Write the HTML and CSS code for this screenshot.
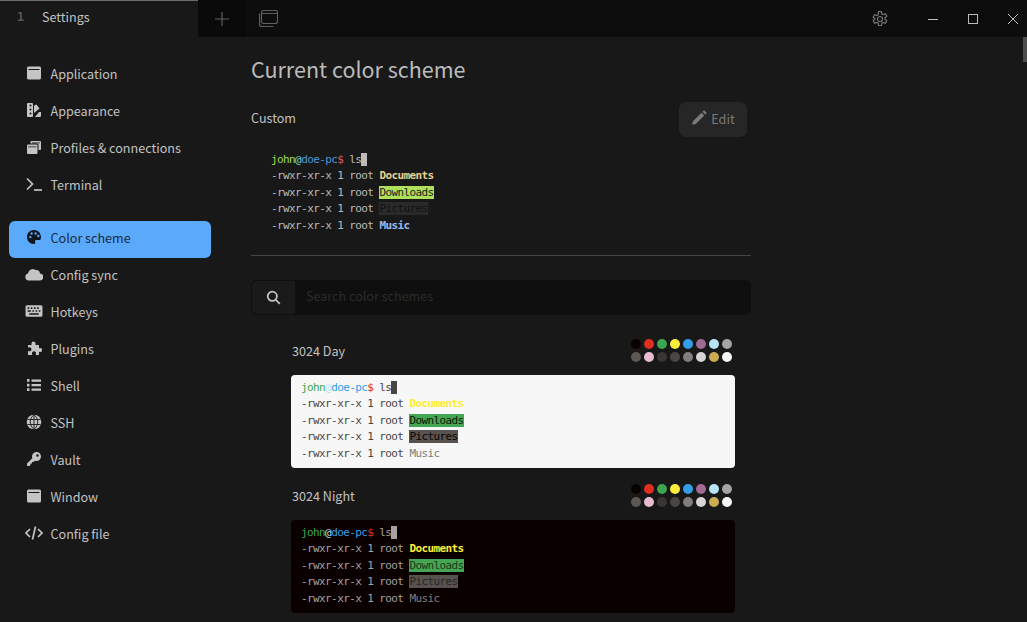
FILE: index.html
```html
<!DOCTYPE html>
<html lang="en">
<head>
<meta charset="utf-8">
<title>Settings</title>
<link rel="stylesheet" href="styles.css">
</head>
<body>
<div class="app">
  <header class="titlebar">
    <div class="tab"><span class="tab-num">1</span><span class="tab-title">Settings</span></div>
    <button class="tb-btn tb-plus" aria-label="New tab"><svg width="16" height="16" viewBox="0 0 16 16"><path d="M8 1v14M1 8h14" class="st-grey"/></svg></button>
    <button class="tb-btn tb-win" aria-label="Profiles"><svg width="19" height="17" viewBox="0 0 19 17"><path d="M4.5.5h12a2 2 0 0 1 2 2v9a2 2 0 0 1-2 2h-12a2 2 0 0 1-2-2v-9a2 2 0 0 1 2-2zM2.500 3.500h16M.5 3.500v11a2 2 0 0 0 2 2h12" class="st-grey"/></svg></button>
    <div class="spacer"></div>
    <button class="tb-btn tb-gear" aria-label="Settings"><svg width="18" height="18" viewBox="0 0 18 18"><path d="M7.600 1h2.800l.4 2.300 1.400.8 2.200-.8 1.400 2.400-1.800 1.500v1.600l1.800 1.500-1.400 2.400-2.200-.8-1.400.8-.4 2.300H7.600l-.4-2.300-1.400-.8-2.200.8-1.400-2.400 1.800-1.500V8.200L2.200 6.700l1.400-2.400 2.200.8 1.400-.8z" transform="translate(0 .500)" class="st-grey"/><circle cx="9" cy="9" r="2.500" class="st-grey"/></svg></button>
    <button class="tb-btn win-ctl" aria-label="Minimize"><svg width="10" height="10" viewBox="0 0 10 10"><path d="M0 5.500h10" class="st-light"/></svg></button>
    <button class="tb-btn win-ctl" aria-label="Maximize"><svg width="10" height="10" viewBox="0 0 10 10"><rect x=".5" y=".5" width="9" height="9" class="st-light"/></svg></button>
    <button class="tb-btn win-ctl" aria-label="Close"><svg width="10" height="10" viewBox="0 0 10 10"><path d="M0 0l10 10M10 0L0 10" class="st-light"/></svg></button>
  </header>

  <div class="body">
    <nav class="sidebar">
      <a class="nav-item"><svg class="ic" viewBox="0 0 16 16"><path d="M2.500 1.500h11a1.500 1.500 0 0 1 1.500 1.500v10a1.500 1.500 0 0 1-1.500 1.500h-11A1.500 1.500 0 0 1 1 13V3a1.500 1.500 0 0 1 1.500-1.500zM2.500 4v1h11V4z" fill-rule="evenodd"/></svg>Application</a>
      <a class="nav-item"><svg class="ic" viewBox="0 0 16 16"><path d="M2 1h4a1 1 0 0 1 1 1v12a1 1 0 0 1-1 1H2a1 1 0 0 1-1-1V2a1 1 0 0 1 1-1zm1.500 2.500a1 1 0 1 0 2 0 1 1 0 0 0-2 0zm0 4a1 1 0 1 0 2 0 1 1 0 0 0-2 0zm0 4a1 1 0 1 0 2 0 1 1 0 0 0-2 0z" fill-rule="evenodd"/><path d="M8 3.500l2.500-1 3 4L8 11zM9 15l4-5h2v4a1 1 0 0 1-1 1z"/></svg>Appearance</a>
      <a class="nav-item"><svg class="ic" viewBox="0 0 16 16"><path d="M2 5.500h8.500a1 1 0 0 1 1 1V14a1 1 0 0 1-1 1H2a1 1 0 0 1-1-1V6.500a1 1 0 0 1 1-1zM2 7.500v.8h8.500v-.8z" fill-rule="evenodd"/><path d="M4.500 4.500V3a1 1 0 0 1 1-1H14a1 1 0 0 1 1 1v7a1 1 0 0 1-1 1h-1.500v-5a1.500 1.500 0 0 0-1.500-1.500zM6 3.500v.8h8v-.8z" fill-rule="evenodd"/></svg>Profiles &amp; connections</a>
      <a class="nav-item nav-before-gap"><svg class="ic ic-wide" viewBox="0 0 17 16"><path d="M1.500 2.500L7 8l-5.500 5.500" class="st-icon"/><path d="M8.500 14h8" class="st-icon"/></svg>Terminal</a>

      <a class="nav-item nav-active"><svg class="ic" viewBox="0 0 16 16"><path d="M8 1C4 1 1 4 1 8s3 7 6.800 7c1.500 0 1.700-1 1.300-1.900-.5-1.200.2-2.100 1.500-2.100H13c1.300 0 2-1 2-2.600C15 4 12 1 8 1zM4.300 9.300a1.200 1.200 0 1 1 0-2.400 1.200 1.200 0 0 1 0 2.400zm1.300-3.600a1.200 1.200 0 1 1 0-2.400 1.200 1.200 0 0 1 0 2.400zm4 0a1.200 1.200 0 1 1 0-2.400 1.200 1.200 0 0 1 0 2.400zm2.700 2.500a1.200 1.200 0 1 1 0-2.400 1.200 1.200 0 0 1 0 2.400z" fill-rule="evenodd"/></svg>Color scheme</a>
      <a class="nav-item"><svg class="ic ic-wide" viewBox="0 0 18 14"><path d="M4 13.500a3.500 3.500 0 0 1-1-6.900A5 5 0 0 1 10.800 3a3.600 3.600 0 0 1 4.200 3.500 3.500 3.500 0 0 1-.5 7z"/></svg>Config sync</a>
      <a class="nav-item"><svg class="ic ic-wide" viewBox="0 0 17 14"><path d="M2 1.500h13a1.500 1.500 0 0 1 1.500 1.500v8a1.500 1.500 0 0 1-1.500 1.500H2A1.500 1.500 0 0 1 .5 11V3A1.500 1.500 0 0 1 2 1.500zM2.500 3.500V5h1.500V3.500zm3 0V5H7V3.500zm3 0V5H10V3.500zm3 0V5H13V3.500zM2.500 6.300v1.500h3V6.300zm4.500 0v1.500h1.500V6.300zm3 0v1.500h1.500V6.300zm3 0v1.500h1.500V6.300zM4 9.200v1.300h9V9.200z" fill-rule="evenodd"/></svg>Hotkeys</a>
      <a class="nav-item"><svg class="ic" viewBox="0 0 16 16"><path d="M5.500 3.500a2 2 0 1 1 4 0V5H13v3.200h.3a2 2 0 1 1 0 3.600H13V15H9.800v-.8a2 2 0 1 0-3.600 0v.8H2v-4h.5a2 2 0 1 0 0-3.500H2V5h3.500z"/></svg>Plugins</a>
      <a class="nav-item"><svg class="ic" viewBox="0 0 16 16"><path d="M5.500 2.500H15v2.200H5.500zM5.500 7H15v2.200H5.500zM5.500 11.500H15v2.200H5.500zM1 2h2.500v2.800H1zM1 6.700h2.500v2.800H1zM1 11.300h2.500v2.800H1z"/></svg>Shell</a>
      <a class="nav-item"><svg class="ic" viewBox="0 0 16 16"><circle cx="8" cy="8" r="7.300"/><path d="M8 .7c-5 4-5 10.600 0 14.600M8 .7c5 4 5 10.600 0 14.600M8 .7v14.600M1.300 5.500h13.400M1.300 10.500h13.400" class="st-cut"/></svg>SSH</a>
      <a class="nav-item"><svg class="ic" viewBox="0 0 16 16"><path d="M10.500 1a4.500 4.500 0 0 1 0 9c-.6 0-1.100-.1-1.600-.3L7.500 11H6v1.500H4.500V14l-1 1H1.500L1 14.500V12.500l5.300-5.300A4.500 4.500 0 0 1 10.500 1zm1 2.200a1.300 1.300 0 1 0 0 2.600 1.300 1.300 0 0 0 0-2.600z" fill-rule="evenodd"/></svg>Vault</a>
      <a class="nav-item"><svg class="ic" viewBox="0 0 16 16"><path d="M2.500 1.500h11a1.500 1.500 0 0 1 1.500 1.500v10a1.500 1.500 0 0 1-1.500 1.500h-11A1.500 1.500 0 0 1 1 13V3a1.500 1.500 0 0 1 1.500-1.500zM2.500 4v1h11V4z" fill-rule="evenodd"/></svg>Window</a>
      <a class="nav-item"><svg class="ic ic-wide" viewBox="0 0 18 16"><path d="M5 4L1 8l4 4M13 4l4 4-4 4M10.500 1.500l-3 13" class="st-icon"/></svg>Config file</a>
    </nav>

    <main class="content">
      <h1 class="page-title">Current color scheme</h1>
      <div class="current-row">
        <span class="current-name">Custom</span>
        <button class="edit-btn"><svg width="16" height="16" viewBox="0 0 15 15"><path d="M9.800 2.500l2.700 2.700-8 8-3.400.7.700-3.400zM10.700 1.600l.9-.9a1 1 0 0 1 1.400 0l1.300 1.300a1 1 0 0 1 0 1.400l-.9.900z"/></svg>Edit</button>
      </div>

      <div class="term term-custom">
        <div><span class="c-green">john</span><span class="c-cyan">@</span><span class="c-blue">doe-pc</span><span class="c-red">$</span> ls<span class="cursor"></span></div>
        <div>-rwxr-xr-x 1 root <b class="c-yellow">Documents</b></div>
        <div>-rwxr-xr-x 1 root <span class="hl-dl">Downloads</span></div>
        <div>-rwxr-xr-x 1 root <span class="hl-pic">Pictures</span></div>
        <div>-rwxr-xr-x 1 root <b class="c-music">Music</b></div>
      </div>

      <hr class="divider">

      <div class="search">
        <span class="search-addon"><svg width="15" height="15" viewBox="0 0 15 15"><circle cx="6.300" cy="6.300" r="4.600" class="st-search"/><path d="M9.800 9.800l4 4" class="st-search"/></svg></span>
        <input class="search-input" type="text" placeholder="Search color schemes">
      </div>

      <section class="scheme">
        <div class="scheme-head">
          <span class="scheme-name">3024 Day</span>
          <div class="swatches">
            <i class="s0"></i><i class="s1"></i><i class="s2"></i><i class="s3"></i><i class="s4"></i><i class="s5"></i><i class="s6"></i><i class="s7"></i>
            <i class="s8"></i><i class="s9"></i><i class="s10"></i><i class="s11"></i><i class="s12"></i><i class="s13"></i><i class="s14"></i><i class="s15"></i>
          </div>
        </div>
        <div class="term term-day">
          <div><span class="c3-green">john</span><span class="c3-at">@</span><span class="c3-blue">doe-pc</span><span class="c3-red">$</span> ls<span class="cursor"></span></div>
          <div>-rwxr-xr-x 1 root <b class="c3-yellow">Documents</b></div>
          <div>-rwxr-xr-x 1 root <span class="hl3-dl">Downloads</span></div>
          <div>-rwxr-xr-x 1 root <span class="hl3-pic">Pictures</span></div>
          <div>-rwxr-xr-x 1 root <span class="c3-music">Music</span></div>
        </div>
      </section>

      <section class="scheme">
        <div class="scheme-head">
          <span class="scheme-name">3024 Night</span>
          <div class="swatches">
            <i class="s0"></i><i class="s1"></i><i class="s2"></i><i class="s3"></i><i class="s4"></i><i class="s5"></i><i class="s6"></i><i class="s7"></i>
            <i class="s8"></i><i class="s9"></i><i class="s10"></i><i class="s11"></i><i class="s12"></i><i class="s13"></i><i class="s14"></i><i class="s15"></i>
          </div>
        </div>
        <div class="term term-night">
          <div><span class="c3-green">john</span><span class="c3-at">@</span><span class="c3-blue">doe-pc</span><span class="c3-red">$</span> ls<span class="cursor"></span></div>
          <div>-rwxr-xr-x 1 root <b class="c3-yellow">Documents</b></div>
          <div>-rwxr-xr-x 1 root <span class="hl3-dl">Downloads</span></div>
          <div>-rwxr-xr-x 1 root <span class="hl3-pic">Pictures</span></div>
          <div>-rwxr-xr-x 1 root <span class="c3-music">Music</span></div>
        </div>
      </section>
    </main>
    <div class="scrollbar"><div class="scroll-thumb"></div></div>
  </div>
</div>
</body>
</html>
```

FILE: styles.css
```css
* { box-sizing: border-box; }
html, body { margin: 0; padding: 0; height: 100%; overflow: hidden; }
body { background: #181818; color: #c2c2c2; font-family: "Noto Sans CJK SC", "Noto Sans", sans-serif; font-size: 12.6px; }
.app { display: flex; flex-direction: column; height: 622px; overflow: hidden; }

.titlebar { display: flex; align-items: stretch; height: 37px; flex: none; background: #0d0d0d; }
.tab { width: 198px; background: #181818; border-top: 1px solid #6a6a6a; display: flex; align-items: center; padding: 0 0 5px 17px; }
.tab-num { font-family: "DejaVu Sans Mono", monospace; font-weight: bold; font-size: 12px; color: #555; width: 25px; }
.tab-title { font-size: 12.6px; color: #c2c2c2; }
.tb-btn { border: 0; background: transparent; padding: 0; display: flex; align-items: center; justify-content: center; }
.tb-plus { width: 48px; background: #0a0a0a; }
.tb-win { width: 44px; }
.tb-gear { width: 32px; margin-right: 17px; }
.win-ctl { width: 40px; }
.win-ctl:last-child { margin-right: -6px; }
.spacer { flex: 1; }
.st-grey { fill: none; stroke: #5e5e5e; stroke-width: 1.2; }
.tb-gear .st-grey { stroke: #747474; }
.st-light { fill: none; stroke: #bcbcbc; stroke-width: 1; }

.body { display: flex; flex: 1; min-height: 0; position: relative; }
.sidebar { width: 222px; flex: none; padding: 18px 11px 0 9px; display: flex; flex-direction: column; }
.nav-item { height: 37px; flex: none; display: flex; align-items: center; padding: 0 0 1px 17px; gap: 8.500px; color: #c2c2c2; font-size: 12.6px; border-radius: 6px; }
.nav-before-gap { margin-bottom: 18px; }
.nav-active { background: #5aa9fb; color: #17293d; margin-bottom: -2px; padding-bottom: 5px; }
.ic { width: 16px; height: 16px; flex: none; fill: #c4c4c4; }
.ic-wide { width: 18px; margin-left: -1px; margin-right: -1px; }
.nav-active .ic { fill: #0e1620; }
.st-icon { fill: none; stroke: #c4c4c4; stroke-width: 1.700; }
.st-cut { fill: none; stroke: #181818; stroke-width: .9; }

.content { width: 500px; margin-left: 29px; flex: none; overflow: hidden; height: 100%; }
.page-title { margin: 15px 0 0; font-size: 21.500px; font-weight: 400; line-height: 33px; color: #bcbcbc; }
.current-row { display: flex; align-items: center; justify-content: space-between; margin-top: 17px; padding-right: 4px; height: 35px; }
.current-name { font-size: 12.6px; color: #c2c2c2; padding-bottom: 4px; }
.edit-btn { display: flex; align-items: center; gap: 4px; width: 68px; height: 35px; justify-content: center; border: 0; border-radius: 7px; background: #262626; color: #7a7a7a; font: inherit; font-size: 12.6px; padding: 0 0 3px; }
.edit-btn svg { fill: #7a7a7a; }

.term { font-family: "DejaVu Sans Mono", monospace; font-size: 11px; letter-spacing: -.6px; line-height: 16.4px; color: #bbb; padding: 5px 10px 5px; }
.term > div { white-space: pre; height: 16.4px; }
.term-custom { margin-top: 10px; padding: 5px 20px 21px; }
.term b { font-weight: bold; }
.cursor { display: inline-block; width: 6px; height: 13px; background: #bbb; vertical-align: -3px; }
.c-green { color: #a5dc55; }
.c-cyan { color: #62dccd; }
.c-blue { color: #4a94dc; }
.c-red { color: #ef5350; }
.c-yellow { color: #e5d08e; }
.c-music { color: #9bbcec; }
.hl-dl { background: #aee05c; color: #1c1c1c; display: inline-block; line-height: 13px; }
.hl-pic { background: #2a2a2a; color: #111; display: inline-block; line-height: 13px; }

.divider { border: 0; border-top: 1px solid #454545; margin: 0; }

.search { display: flex; height: 35px; margin-top: 24px; border-radius: 6px; background: #0f0f0f; overflow: hidden; }
.search-addon { width: 45px; flex: none; display: flex; align-items: center; justify-content: center; background: #1a1a1a; border: 1px solid #0f0f0f; border-radius: 6px 0 0 6px; }
.st-search { fill: none; stroke: #c4c4c4; stroke-width: 1.800; }
.search-input { flex: 1; min-width: 0; border: 0; outline: 0; background: transparent; padding: 0 10px 4px; font: inherit; font-size: 12.6px; color: #bbb; }
.search-input::placeholder { color: #2b2b2b; opacity: 1; }

.scheme { margin-left: 40px; width: 444px; }
.scheme-head { display: flex; align-items: center; justify-content: space-between; height: 60px; padding: 12px 3px 0 1px; }
.scheme + .scheme .scheme-head { height: 52px; padding-top: 4px; }
.scheme-name { font-size: 12.6px; color: #c2c2c2; padding-bottom: 1px; }
.swatches { display: grid; grid-template-columns: repeat(8, 10px); gap: 3px; }
.swatches i { width: 10px; height: 10px; border-radius: 50%; display: block; }
.s0 { background: #090300; } .s1 { background: #e02e20; } .s2 { background: #3da552; } .s3 { background: #fdec3a; }
.s4 { background: #339ee8; } .s5 { background: #a16a94; } .s6 { background: #b5e4f4; } .s7 { background: #a5a2a2; }
.s8 { background: #5c5855; } .s9 { background: #e8bbd0; } .s10 { background: #3a3432; } .s11 { background: #4a4543; }
.s12 { background: #807d7c; } .s13 { background: #d6d5d4; } .s14 { background: #cdab53; } .s15 { background: #f7f7f7; }

.term-day { background: #f7f7f7; color: #4a4543; border-radius: 4px; height: 93px; }
.term-day .cursor { background: #4a4543; }
.term-night { background: #0a0000; color: #a5a2a2; border-radius: 4px; height: 93px; }
.term-night .cursor { background: #a5a2a2; }
.c3-green { color: #3da552; }
.c3-at { color: #b5e4f4; }
.c3-blue { color: #339ee8; }
.c3-red { color: #e02e20; }
.c3-yellow { color: #fdec3a; }
.c3-music { color: #807d7c; }
.hl3-dl { background: #45a552; color: #0a1a0a; display: inline-block; line-height: 13px; }
.term-night .hl3-dl { color: #1a3a1a; }
.hl3-pic { background: #575250; color: #090300; display: inline-block; line-height: 13px; }
.term-night .hl3-pic { color: #2a2624; }

.scrollbar { position: absolute; right: 0; top: 0; bottom: 0; width: 4px; }
.scroll-thumb { height: 25px; background: #4d4d4d; }
```
